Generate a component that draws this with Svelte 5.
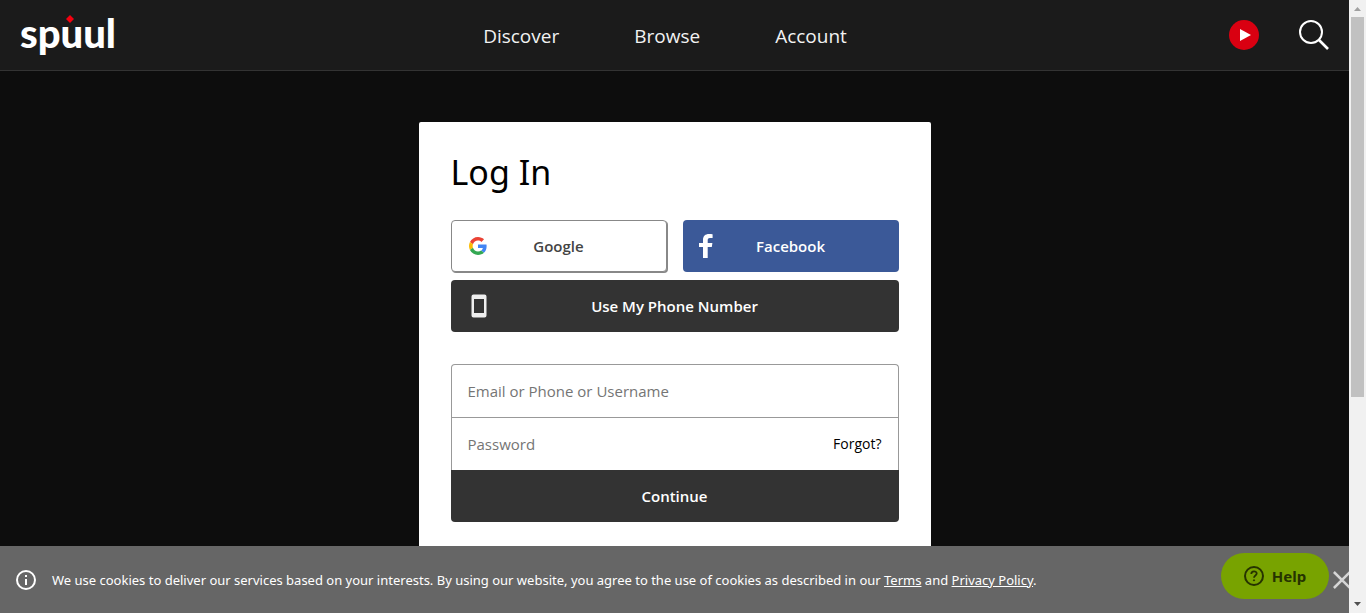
<script>
  let login = $state('');
  let password = $state('');
  const links = ['Discover', 'Browse', 'Account'];
</script>

<div class="window">
  <div class="page">
    <header>
      <a class="logo" href="#home" aria-label="spuul">
        <span>spuul</span>
        <svg class="spark" width="8" height="8" viewBox="0 0 8 8" aria-hidden="true"><path d="M4 0 6 2 8 4 6 6 4 8 2 6 0 4 2 2Z" fill="#f5000f" /></svg>
      </a>
      <nav>
        {#each links as link}
          <a href={'#' + link.toLowerCase()}>{link}</a>
        {/each}
      </nav>
      <div class="tools">
        <button class="icon" aria-label="Watch">
          <svg width="30" height="30" viewBox="0 0 30 30"><circle cx="15" cy="15" r="15" fill="#d90011" /><path d="M11 9v12l11-6z" fill="#fff" /></svg>
        </button>
        <button class="icon" aria-label="Search">
          <svg width="32" height="32" viewBox="0 0 32 32" fill="none" stroke="#fff"><circle cx="13" cy="13" r="11" stroke-width="2" /><path d="M21 21l9 9" stroke-width="2.6" /></svg>
        </button>
      </div>
    </header>

    <main>
      <section class="card">
        <h1>Log In</h1>
        <div class="social">
          <button class="btn google">
            <svg width="18" height="18" viewBox="0 0 48 48" aria-hidden="true">
              <path fill="#EA4335" d="M24 9.5c3.54 0 6.71 1.22 9.21 3.6l6.85-6.85C35.9 2.38 30.47 0 24 0 14.62 0 6.51 5.38 2.56 13.22l7.98 6.19C12.43 13.72 17.74 9.5 24 9.5z" />
              <path fill="#4285F4" d="M46.98 24.55c0-1.57-.15-3.09-.38-4.55H24v9.02h12.94c-.58 2.96-2.26 5.48-4.78 7.18l7.73 6c4.51-4.18 7.09-10.36 7.09-17.65z" />
              <path fill="#FBBC05" d="M10.53 28.59c-.48-1.45-.76-2.99-.76-4.59s.27-3.14.76-4.59l-7.98-6.19C.92 16.46 0 20.12 0 24c0 3.88.92 7.54 2.56 10.78l7.97-6.19z" />
              <path fill="#34A853" d="M24 48c6.48 0 11.93-2.13 15.89-5.81l-7.73-6c-2.15 1.45-4.92 2.3-8.16 2.3-6.26 0-11.57-4.22-13.47-9.91l-7.98 6.19C6.51 42.62 14.62 48 24 48z" />
            </svg>
            <span>Google</span>
          </button>
          <button class="btn facebook">
            <svg width="14" height="24" viewBox="0 0 14 24" aria-hidden="true"><path fill="#fff" d="M4 24V13H0V9h4V6c0-4 2.300-6 6-6 1.600 0 3 .1 3.600.2V4H11c-2 0-2.300 1-2.300 2.300V9h4.700l-.6 4H8.700v11z" /></svg>
            <span>Facebook</span>
          </button>
        </div>
        <button class="btn phone">
          <svg width="16" height="24" viewBox="0 0 16 24" aria-hidden="true"><path fill="#eee" fill-rule="evenodd" d="M2.500.5h11a2 2 0 0 1 2 2v19a2 2 0 0 1-2 2h-11a2 2 0 0 1-2-2v-19a2 2 0 0 1 2-2zM3 5v14h10V5z" /></svg>
          <span>Use My Phone Number</span>
        </button>

        <form onsubmit={(e) => e.preventDefault()}>
          <div class="field">
            <input type="text" aria-label="Email or Phone or Username" placeholder="Email or Phone or Username" bind:value={login} />
          </div>
          <div class="field">
            <input type="password" aria-label="Password" placeholder="Password" bind:value={password} />
            <a href="#forgot">Forgot?</a>
          </div>
          <button class="submit">Continue</button>
        </form>
      </section>
    </main>

    <aside class="cookies">
      <svg width="20" height="20" viewBox="0 0 20 20" fill="none" stroke="#fff" stroke-width="2" aria-hidden="true"><circle cx="10" cy="10" r="9" /><path d="M10 9v6M10 5v2" /></svg>
      <p>We use cookies to deliver our services based on your interests. By using our website, you agree to the use of cookies as described in our <a href="#terms">Terms</a> and <a href="#privacy">Privacy Policy</a>.</p>
      <button class="help">
        <svg width="20" height="20" viewBox="0 0 20 20" fill="none" stroke="#263300" aria-hidden="true"><circle cx="10" cy="10" r="9" stroke-width="2" /><path d="M7.300 8c0-3.600 5.400-3.400 5.400-.4 0 1.900-2.700 2-2.700 4.200" stroke-width="1.800" /><circle cx="10" cy="14.300" r=".6" fill="#263300" /></svg>
        <span>Help</span>
      </button>
      <button class="icon close" aria-label="Close">
        <svg width="18" height="20" viewBox="0 0 18 20" fill="none" stroke="#d5d5d5" stroke-width="2.800"><path d="M1 1l18 18M1 19L19 1" /></svg>
      </button>
    </aside>
  </div>

  <div class="scrollbar" aria-hidden="true">
    <svg width="17" height="17" viewBox="0 0 17 17"><path d="M5 11h7L8.500 7z" fill="#a0a0a0" /></svg>
    <div class="thumb"></div>
    <svg width="17" height="17" viewBox="0 0 17 17"><path d="M5 6h7L8.500 10z" fill="#505050" /></svg>
  </div>
</div>

<style>
  :global(body) {
    margin: 0;
    background: #0d0d0d;
  }
  .window {
    display: grid;
    grid-template-columns: minmax(0, 1fr) 17px;
    height: 100vh;
    overflow: hidden;
    font-family: 'Open Sans', 'Noto Sans', sans-serif;
  }
  .window * {
    box-sizing: border-box;
  }
  .page {
    position: relative;
    overflow: hidden;
    background: #0d0d0d;
  }
  a {
    color: inherit;
  }
  button {
    border: 0;
    padding: 0;
    font-family: inherit;
    cursor: pointer;
  }
  .icon {
    display: flex;
    background: none;
  }
  header {
    display: grid;
    grid-template-columns: 1fr auto 1fr;
    align-items: center;
    height: 71px;
    padding: 0 19px 0 20px;
    background: #1b1b1b;
    border-bottom: 1px solid #333;
    color: #f2f2f2;
  }
  .logo {
    position: relative;
    justify-self: start;
    padding-bottom: 4px;
    font: 900 40px/48px Lato, sans-serif;
    color: #fff;
    text-decoration: none;
  }
  .spark {
    position: absolute;
    left: 46px;
    top: 6px;
  }
  nav {
    display: flex;
    gap: 75px;
    margin-right: 20px;
    padding-top: 2px;
    font-size: 19px;
    line-height: 28px;
  }
  nav a {
    text-decoration: none;
  }
  .tools {
    display: flex;
    align-items: center;
    justify-self: end;
    gap: 39px;
  }
  main {
    padding: 51px 16px 0;
  }
  .card {
    max-width: 512px;
    margin: 0 auto;
    padding: 24px 32px 80px;
    border-radius: 2px;
    background: #fff;
  }
  h1 {
    margin: 0 0 22px;
    font: 400 34px/52px 'Noto Sans', sans-serif;
    color: #000;
  }
  .social {
    display: grid;
    grid-template-columns: 1fr 1fr;
    gap: 16px;
    margin-bottom: 8px;
  }
  .btn {
    display: grid;
    grid-template-columns: 24px 1fr 24px;
    align-items: center;
    justify-items: center;
    width: 100%;
    height: 52px;
    padding: 0 16px;
    border-radius: 4px;
    font-size: 15px;
    font-weight: 600;
    color: #fff;
  }
  .google {
    border: 1px solid #888;
    box-shadow: 1px 1px 0 #888;
    padding: 0 14px;
    background: #fff;
    color: #444;
  }
  .facebook {
    padding: 0 11px;
    background: #3b5998;
  }
  .phone {
    background: #333;
  }
  form {
    margin-top: 32px;
  }
  .field {
    display: flex;
    align-items: center;
    height: 53px;
    padding: 0 16px;
    border: 1px solid #999;
    border-bottom: 0;
    font-size: 14px;
    color: #000;
  }
  .field:first-child {
    border-radius: 4px 4px 0 0;
  }
  .field input {
    flex: 1;
    min-width: 0;
    padding: 0;
    border: 0;
    outline: 0;
    background: none;
    font: 400 15px/24px 'Open Sans', 'Noto Sans', sans-serif;
    color: #333;
  }
  .field input::placeholder {
    color: #757575;
    opacity: 1;
  }
  .field a {
    padding-bottom: 2px;
    text-decoration: none;
  }
  .submit {
    display: block;
    width: 100%;
    height: 52px;
    border-radius: 0 0 4px 4px;
    background: #333;
    color: #fff;
    font-size: 15px;
    font-weight: 600;
  }
  .cookies {
    position: absolute;
    left: 0;
    right: 0;
    bottom: 0;
    display: flex;
    align-items: center;
    height: 67px;
    padding-left: 16px;
    background: #666;
    color: #fff;
  }
  .cookies > svg {
    flex: none;
  }
  .cookies p {
    flex: 1;
    margin: 0 16px;
    font: 400 13px/20px 'Noto Sans', sans-serif;
  }
  .help {
    display: flex;
    align-items: center;
    justify-content: center;
    gap: 8px;
    width: 108px;
    height: 46px;
    margin: 0 4px 8px 0;
    border-radius: 23px;
    background: #78a300;
    color: #263300;
    font: 700 15px/20px 'Noto Sans', sans-serif;
  }
  .close {
    width: 16px;
    overflow: hidden;
  }
  .scrollbar {
    display: flex;
    flex-direction: column;
    background: #f1f1f1;
  }
  .thumb {
    width: 13px;
    height: 62%;
    margin: 0 2px auto;
    background: #c1c1c1;
  }
</style>
